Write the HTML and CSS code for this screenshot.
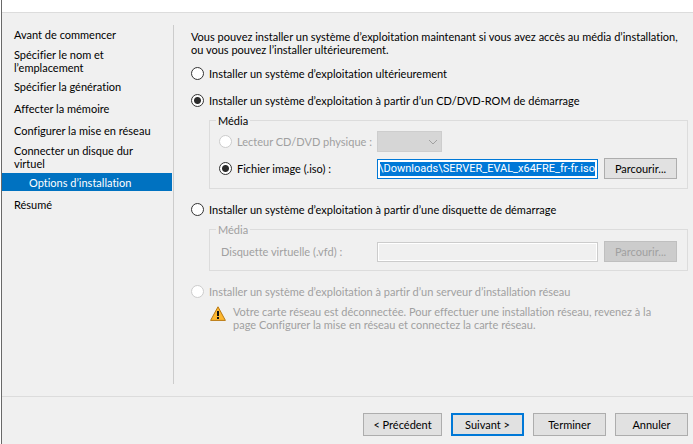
FILE: index.html
```html
<!DOCTYPE html>
<html lang="fr">
<head>
<meta charset="utf-8">
<title>Assistant Nouvel ordinateur virtuel</title>
<link rel="stylesheet" href="styles.css">
</head>
<body>
<form class="wizard">
  <header class="banner"></header>
  <div class="content">
    <nav class="steps">
      <a class="step" href="#">Avant de commencer</a>
      <a class="step" href="#">Spécifier le nom et<br>l’emplacement</a>
      <a class="step" href="#">Spécifier la génération</a>
      <a class="step" href="#">Affecter la mémoire</a>
      <a class="step" href="#">Configurer la mise en réseau</a>
      <a class="step" href="#">Connecter un disque dur<br>virtuel</a>
      <a class="step current" href="#" aria-current="step">Options d’installation</a>
      <a class="step" href="#">Résumé</a>
    </nav>
    <main class="page">
      <p class="intro">Vous pouvez installer un système d’exploitation maintenant si vous avez accès au média d’installation,<br>ou vous pouvez l’installer ultérieurement.</p>
      <label class="choice"><input type="radio" name="install">Installer un système d’exploitation ultérieurement</label>
      <label class="choice"><input type="radio" name="install" checked>Installer un système d’exploitation à partir d’un CD/DVD-ROM de démarrage</label>
      <fieldset class="media">
        <legend>Média</legend>
        <div class="row">
          <label class="choice" for="drive-on"><input type="radio" name="source" id="drive-on" disabled>Lecteur CD/DVD physique :</label>
          <span class="select">
            <select aria-label="Lecteur CD/DVD physique" disabled><option></option></select>
            <svg class="chevron" viewBox="0 0 10 6" aria-hidden="true"><path d="M1 1l4 4 4-4"/></svg>
          </span>
        </div>
        <div class="row">
          <label class="choice" for="iso-on"><input type="radio" name="source" id="iso-on" checked>Fichier image (.iso) :</label>
          <input class="path selected" type="text" aria-label="Fichier image (.iso)" value="\Downloads\SERVER_EVAL_x64FRE_fr-fr.iso">
          <button type="button">Parcourir...</button>
        </div>
      </fieldset>
      <label class="choice"><input type="radio" name="install">Installer un système d’exploitation à partir d’une disquette de démarrage</label>
      <fieldset class="media" disabled>
        <legend>Média</legend>
        <div class="row">
          <label class="caption" for="vfd">Disquette virtuelle (.vfd) :</label>
          <input class="path" type="text" id="vfd">
          <button type="button">Parcourir...</button>
        </div>
      </fieldset>
      <label class="choice"><input type="radio" name="install" disabled>Installer un système d’exploitation à partir d’un serveur d’installation réseau</label>
      <div class="warning">
        <svg class="warning-icon" viewBox="0 0 16 15" aria-hidden="true">
          <path class="sign" d="M8 .8L15.4 14.4H.6z"/>
          <path class="mark" d="M7 5h2v5H7zM7 11h2v2H7z"/>
        </svg>
        <p>Votre carte réseau est déconnectée. Pour effectuer une installation réseau, revenez à la<br>page Configurer la mise en réseau et connectez la carte réseau.</p>
      </div>
    </main>
  </div>
  <footer class="actions">
    <button class="wide" type="button">&lt; Précédent</button>
    <button class="primary" type="button">Suivant &gt;</button>
    <button type="button">Terminer</button>
    <button type="button">Annuler</button>
  </footer>
</form>
</body>
</html>
```
FILE: styles.css
```css
* { box-sizing: border-box; }

body {
  margin: 0;
  background: #fff;
  color: #000;
  font: 11px/13px Lato, "Liberation Sans", sans-serif;
  font-variant-ligatures: none;
}

input, select, button { font: inherit; color: inherit; }

p { margin: 0; }

.wizard {
  display: flex;
  flex-direction: column;
  min-height: 100vh;
  margin-left: 1px;
  border-left: 1px solid #696969;
  background: #f0f0f0;
}

.banner {
  height: 13px;
  background: #fff;
  border-bottom: 1px solid #dcdcdc;
}

.content {
  flex: 1;
  display: flex;
  padding: 12px 0;
}

.steps {
  display: flex;
  flex-direction: column;
  flex: 0 0 172px;
  padding-right: 1px;
  border-right: 1px solid #ccc;
}

.step {
  padding: 3px 12px 6px;
  color: inherit;
  text-decoration: none;
}

.step:has(br) { padding: 1px 12px 3px; }

.step.current {
  margin: 0 0 4px;
  padding: 3px 27px 2px;
  background: #0072c1;
  color: #fff;
}

.page {
  flex: 1;
  padding: 5px 5px 0 17px;
  white-space: nowrap;
}

.choice {
  display: flex;
  align-items: center;
  gap: 5px;
}

.page > .choice { margin-top: 14px; }
.page > .intro + .choice { margin-top: 11px; }

input[type="radio"] {
  appearance: none;
  flex: none;
  width: 13px;
  height: 13px;
  margin: 0;
  border: 1px solid #333;
  border-radius: 50%;
  background: #fff;
}

input[type="radio"]:checked {
  background: radial-gradient(circle, #2b2b2b 3px, #fff 4px);
}

input[type="radio"]:disabled { border-color: #ccc; }

.choice:has(:disabled), .media:disabled, .warning { color: #a0a0a0; }

.media {
  min-width: 0;
  margin: 7px 0 0 18px;
  padding: 4px 10px 9px 9px;
  border: 1px solid #dcdcdc;
}

.media:disabled { padding: 5px 10px 8px 9px; }

legend {
  margin-left: -3px;
  padding: 0 2px;
}

.row {
  display: grid;
  grid-template-columns: 152px 1fr 73px;
  align-items: center;
  column-gap: 6px;
}

.row + .row { margin-top: 6px; }

.caption { padding-left: 2px; }

.select {
  position: relative;
  width: 65px;
}

select {
  appearance: none;
  display: block;
  width: 100%;
  height: 21px;
  border: 1px solid #bfbfbf;
  border-radius: 0;
  background: #ccc;
}

.chevron {
  position: absolute;
  right: 4px;
  top: 8px;
  width: 10px;
  height: 6px;
  fill: none;
  stroke: #a0a0a0;
}

.path {
  min-width: 0;
  height: 20px;
  padding: 2px;
  border: 1px solid #ccc;
  border-radius: 0;
  background: #f0f0f0;
  box-shadow: inset 0 0 0 1px #fff;
}

.path.selected {
  padding: 2px 1px;
  border-color: #0078d7;
  background: #0078d7 content-box;
  box-shadow: inset 0 0 0 2px #fff;
  color: #fff;
  font-family: Roboto, "Liberation Sans", sans-serif;
}

button {
  width: 73px;
  height: 23px;
  padding: 0;
  border: 1px solid #adadad;
  border-radius: 0;
  background: #e1e1e1;
}

.row button { height: 21px; }

button:disabled {
  border-color: #bfbfbf;
  background: #ccc;
  color: #a0a0a0;
}

.warning {
  display: flex;
  gap: 7px;
  margin: 7px 0 0 19px;
}

.warning-icon {
  flex: none;
  width: 16px;
  height: 15px;
  margin-top: 1px;
}

.sign {
  fill: #fdb72f;
  stroke: #b87812;
  stroke-linejoin: round;
}

.mark { fill: #111; }

.actions {
  display: flex;
  justify-content: flex-end;
  gap: 9px;
  padding: 16px 5px 8px;
  border-top: 1px solid #dcdcdc;
}

.wide { width: 79px; }

.primary { border: 2px solid #0078d7; }
```
